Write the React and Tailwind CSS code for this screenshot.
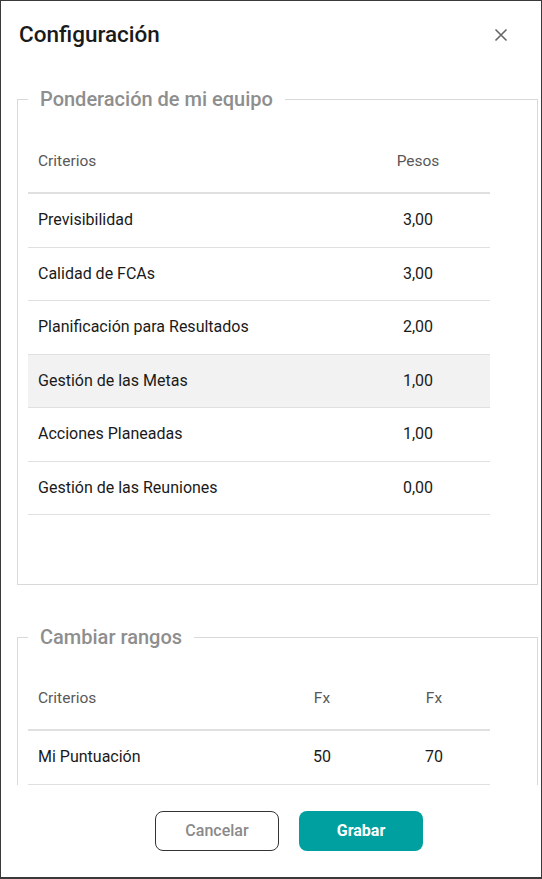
import React from "react";

const pesos = [
  { name: "Previsibilidad", value: "3,00" },
  { name: "Calidad de FCAs", value: "3,00" },
  { name: "Planificación para Resultados", value: "2,00" },
  { name: "Gestión de las Metas", value: "1,00", active: true },
  { name: "Acciones Planeadas", value: "1,00" },
  { name: "Gestión de las Reuniones", value: "0,00" },
];

const rangos = [{ name: "Mi Puntuación", a: "50", b: "70" }];

function Section({ title, className, children }) {
  return (
    <fieldset className={`border border-[#d9d9d9] p-0 m-0 ml-[16px] mr-[3px] ${className}`}>
      <legend className="ml-[10px] px-[12px] text-[20px] leading-[30px] font-medium text-[#8e8e8e]">
        {title}
      </legend>
      <div className="pl-[10px] pr-[47px]">{children}</div>
    </fieldset>
  );
}

export default function App() {
  return (
    <div
      className="w-[542px] h-[879px] bg-white border border-b-2 border-[#3a3a3a] flex flex-col overflow-hidden"
      style={{ fontFamily: "Roboto, 'Liberation Sans', sans-serif" }}
    >
      {/* header */}
      <div className="h-[70px] shrink-0 flex items-center justify-between pl-[18px] pr-[33px]">
        <h1 className="mb-[2px] text-[22.5px] font-medium text-[#1a1a1a]">Configuración</h1>
        <button className="mb-[2px] text-[#666]">
          <svg width="14" height="14" viewBox="0 0 14 14">
            <path d="M1.5 1.5 L12.5 12.5 M12.5 1.5 L1.5 12.5" stroke="currentColor" strokeWidth="1.6" />
          </svg>
        </button>
      </div>

      {/* body */}
      <div className="flex-1 overflow-hidden pt-[13px]">
        <Section title="Ponderación de mi equipo">
          <div className="mt-[18px] h-[62px] flex items-center border-b-2 border-[#e0e0e0] text-[15.5px] text-[#585858]">
            <div className="flex-1 pl-[10px]">Criterios</div>
            <div className="w-[144px] text-center">Pesos</div>
          </div>
          {pesos.map((p) => (
            <div
              key={p.name}
              className={`h-[53.5px] flex items-center border-b border-[#e0e0e0] text-[16px] text-[#1a1a1a] ${
                p.active ? "bg-[#f2f2f2]" : ""
              }`}
            >
              <div className="flex-1 pl-[10px]">{p.name}</div>
              <div className="w-[144px] text-center">{p.value}</div>
            </div>
          ))}
          <div className="h-[69px]" />
        </Section>

        <Section title="Cambiar rangos" className="mt-[37px]">
          <div className="mt-[17px] h-[62px] flex items-center border-b-2 border-[#e0e0e0] text-[15.5px] text-[#585858]">
            <div className="flex-1 pl-[10px]">Criterios</div>
            <div className="w-[112px] text-center">Fx</div>
            <div className="w-[112px] text-center">Fx</div>
          </div>
          {rangos.map((r) => (
            <div
              key={r.name}
              className="h-[53.5px] flex items-center border-b border-[#e0e0e0] text-[16px] text-[#1a1a1a]"
            >
              <div className="flex-1 pl-[10px]">{r.name}</div>
              <div className="w-[112px] text-center">{r.a}</div>
              <div className="w-[112px] text-center">{r.b}</div>
            </div>
          ))}
          <div className="h-[40px]" />
        </Section>
      </div>

      {/* footer */}
      <div className="h-[92px] shrink-0 flex items-center gap-5 pl-[154px]">
        <button className="w-[124px] h-[40px] rounded-[8px] border border-[#333] text-[16px] font-medium text-[#8a8a8a]">
          Cancelar
        </button>
        <button className="w-[124px] h-[40px] rounded-[8px] bg-[#00a0a0] text-[16px] font-bold text-white">
          Grabar
        </button>
      </div>
    </div>
  );
}
